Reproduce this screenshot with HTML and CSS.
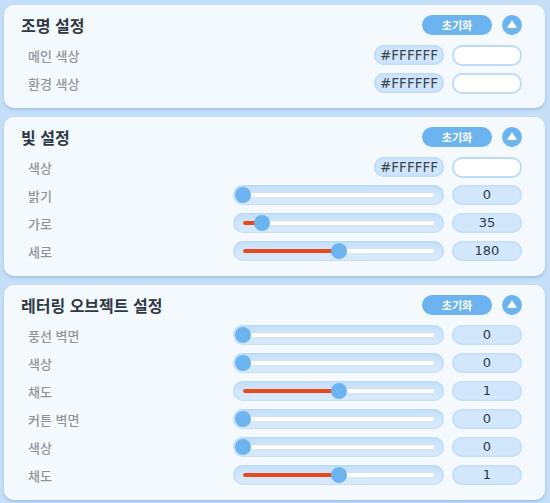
FILE: index.html
```html
<!DOCTYPE html>
<html lang="ko">
<head>
    <meta charset="UTF-8">
    <title>설정</title>
    <link rel="stylesheet" href="styles.css">
</head>
<body>
    <!-- 조명 설정 -->
    <div class="panel">
        <div class="panel-header">
            <h2>조명 설정</h2>
            <button class="reset-btn">초기화</button>
            <button class="fold-btn"><span class="tri"></span></button>
        </div>
        <div class="row">
            <span class="label">메인 색상</span>
            <span class="hex">#FFFFFF</span>
            <span class="swatch"></span>
        </div>
        <div class="row">
            <span class="label">환경 색상</span>
            <span class="hex">#FFFFFF</span>
            <span class="swatch"></span>
        </div>
    </div>

    <!-- 빛 설정 -->
    <div class="panel">
        <div class="panel-header">
            <h2>빛 설정</h2>
            <button class="reset-btn">초기화</button>
            <button class="fold-btn"><span class="tri"></span></button>
        </div>
        <div class="row">
            <span class="label">색상</span>
            <span class="hex">#FFFFFF</span>
            <span class="swatch"></span>
        </div>
        <div class="row">
            <span class="label">밝기</span>
            <div class="slider"><div class="track"><div class="fill" style="width: 0%"></div><div class="thumb" style="left: 0%"></div></div></div>
            <span class="value">0</span>
        </div>
        <div class="row">
            <span class="label">가로</span>
            <div class="slider"><div class="track"><div class="fill" style="width: 9.72%"></div><div class="thumb" style="left: 9.72%"></div></div></div>
            <span class="value">35</span>
        </div>
        <div class="row">
            <span class="label">세로</span>
            <div class="slider"><div class="track"><div class="fill" style="width: 50%"></div><div class="thumb" style="left: 50%"></div></div></div>
            <span class="value">180</span>
        </div>
    </div>

    <!-- 레터링 오브젝트 설정 -->
    <div class="panel">
        <div class="panel-header">
            <h2>레터링 오브젝트 설정</h2>
            <button class="reset-btn">초기화</button>
            <button class="fold-btn"><span class="tri"></span></button>
        </div>
        <div class="row">
            <span class="label">풍선 벽면</span>
            <div class="slider"><div class="track"><div class="fill" style="width: 0%"></div><div class="thumb" style="left: 0%"></div></div></div>
            <span class="value">0</span>
        </div>
        <div class="row">
            <span class="label">색상</span>
            <div class="slider"><div class="track"><div class="fill" style="width: 0%"></div><div class="thumb" style="left: 0%"></div></div></div>
            <span class="value">0</span>
        </div>
        <div class="row">
            <span class="label">채도</span>
            <div class="slider"><div class="track"><div class="fill" style="width: 50%"></div><div class="thumb" style="left: 50%"></div></div></div>
            <span class="value">1</span>
        </div>
        <div class="row">
            <span class="label">커튼 벽면</span>
            <div class="slider"><div class="track"><div class="fill" style="width: 0%"></div><div class="thumb" style="left: 0%"></div></div></div>
            <span class="value">0</span>
        </div>
        <div class="row">
            <span class="label">색상</span>
            <div class="slider"><div class="track"><div class="fill" style="width: 0%"></div><div class="thumb" style="left: 0%"></div></div></div>
            <span class="value">0</span>
        </div>
        <div class="row">
            <span class="label">채도</span>
            <div class="slider"><div class="track"><div class="fill" style="width: 50%"></div><div class="thumb" style="left: 50%"></div></div></div>
            <span class="value">1</span>
        </div>
    </div>
</body>
</html>
```

FILE: styles.css
```css
* {
    margin: 0;
    padding: 0;
    box-sizing: border-box;
}

body {
    font-family: "Noto Sans CJK KR", "Noto Sans", sans-serif;
    background: #c6dff8;
    padding: 5px 5px 0 4px;
    overflow: hidden;
}

.panel {
    background: #f4f9fe;
    border-radius: 10px;
    box-shadow: 0 2px 3px rgba(90, 140, 200, 0.35);
    padding: 10px 23px 15px 17px;
    margin-bottom: 9px;
    display: flex;
    flex-direction: column;
    gap: 8px;
}

.panel-header {
    display: flex;
    align-items: center;
    height: 20px;
    margin-bottom: 2px;
}

.panel-header h2 {
    flex: 1;
    font-size: 16px;
    font-weight: 700;
    color: #2e3946;
    line-height: 20px;
}

.reset-btn {
    width: 70px;
    height: 20px;
    border: none;
    border-radius: 10px;
    background: #6cb4f0;
    color: white;
    font-family: "Noto Sans CJK KR", sans-serif;
    font-size: 11px;
    font-weight: 700;
    margin-right: 10px;
}

.fold-btn {
    width: 20px;
    height: 20px;
    border: none;
    border-radius: 50%;
    background: #6cb4f0;
    display: flex;
    align-items: center;
    justify-content: center;
}

.tri {
    width: 0;
    height: 0;
    border-left: 5px solid transparent;
    border-right: 5px solid transparent;
    border-bottom: 8px solid white;
    margin-top: -2px;
}

.row {
    display: flex;
    align-items: center;
    height: 20px;
}

.label {
    flex: 1;
    padding-left: 7px;
    font-size: 13px;
    color: #90959c;
    font-weight: 500;
}

.hex {
    width: 70px;
    height: 20px;
    border-radius: 10px;
    background: #cfe5fb;
    box-shadow: inset 0 0 3px #9ccbf4;
    font-family: "DejaVu Sans", sans-serif;
    font-size: 13.5px;
    color: #3a4552;
    text-align: center;
    line-height: 20px;
    margin-right: 8px;
}

.swatch {
    width: 70px;
    height: 21px;
    border-radius: 10px;
    background: white;
    border: 2px solid #bcdcf8;
}

.slider {
    width: 211px;
    height: 20px;
    border-radius: 10px;
    background: linear-gradient(#c4dffa, #dcecfc);
    box-shadow: inset 0 0 3px #a3cff5;
    padding: 0 10px 0 10px;
    display: flex;
    align-items: center;
    margin-right: 8px;
}

.track {
    position: relative;
    flex: 1;
    height: 4px;
    border-radius: 2px;
    background: white;
}

.fill {
    height: 4px;
    border-radius: 2px;
    background: #e9481a;
}

.thumb {
    position: absolute;
    top: -6px;
    width: 16px;
    height: 16px;
    margin-left: -8px;
    border-radius: 50%;
    background: #6cb4f0;
}

.value {
    width: 70px;
    height: 20px;
    border-radius: 10px;
    background: #d3e7fc;
    box-shadow: inset 0 0 3px #a3cff5;
    font-family: "DejaVu Sans", sans-serif;
    font-size: 13px;
    color: #2f3944;
    text-align: center;
    line-height: 20px;
}
```
